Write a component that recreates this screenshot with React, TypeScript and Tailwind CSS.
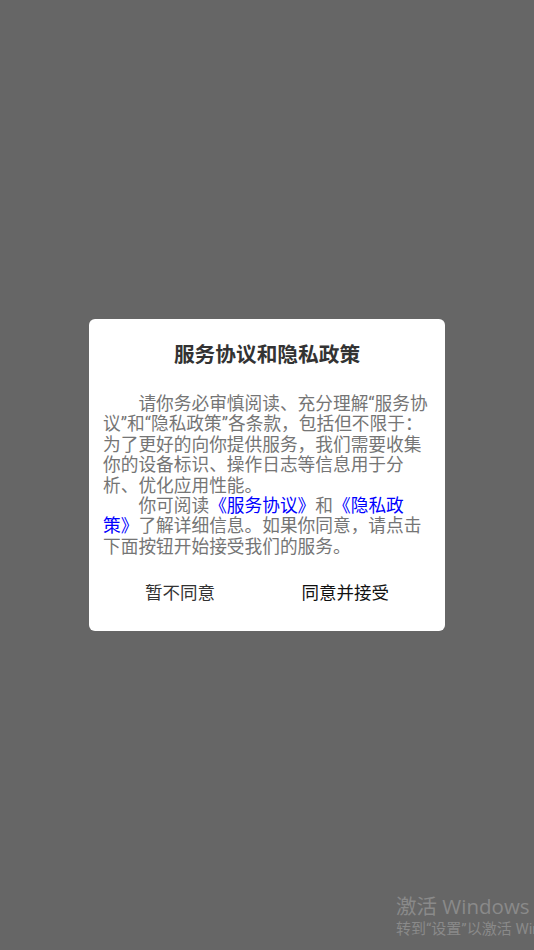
import React from "react"

const font = { fontFamily: '"Roboto", "Noto Sans CJK SC", sans-serif' }

export default function App() {
    return (
        <div
            className="relative flex h-[950px] w-full items-center justify-center overflow-hidden bg-[#666666]"
            style={font}
        >
            {/* Privacy dialog */}
            <div className="flex w-[356px] flex-col rounded-[6px] bg-white">
                <h2 className="pt-[22px] text-center text-[20.7px] font-bold leading-[28px] text-[#333333]">
                    服务协议和隐私政策
                </h2>

                <div className="mt-[25px] px-[14px] text-[17.7px] leading-[20.4px] text-[#757575]">
                    <p className="indent-[2em]">
                        请你务必审慎阅读、充分理解“服务协<br />
                        议”和“隐私政策”各条款，包括但不限于：<br />
                        为了更好的向你提供服务，我们需要收集<br />
                        你的设备标识、操作日志等信息用于分<br />
                        析、优化应用性能。
                    </p>
                    <p className="indent-[2em]">
                        你可阅读<span className="text-[#0000ff]">《服务协议》</span>和<span className="text-[#0000ff]">《隐私政<br />策》</span>了解详细信息。如果你同意，请点击<br />
                        下面按钮开始接受我们的服务。
                    </p>
                </div>

                <div className="flex justify-between px-[56px] pb-[26px] pt-[24px] text-[17.5px] leading-[24px]">
                    <button className="text-[#333333]">暂不同意</button>
                    <button className="text-[#111111]">同意并接受</button>
                </div>
            </div>

            {/* Windows activation watermark */}
            <div className="pointer-events-none absolute left-[396px] top-[893px] whitespace-nowrap text-[#8a8a8a]">
                <div className="text-[20.5px] leading-[26px]" style={{ fontFamily: '"Open Sans", "Noto Sans CJK SC", sans-serif' }}>
                    激活 Windows
                </div>
                <div className="text-[15px] leading-[20px]">转到“设置”以激活 Windows。</div>
            </div>
        </div>
    )
}
